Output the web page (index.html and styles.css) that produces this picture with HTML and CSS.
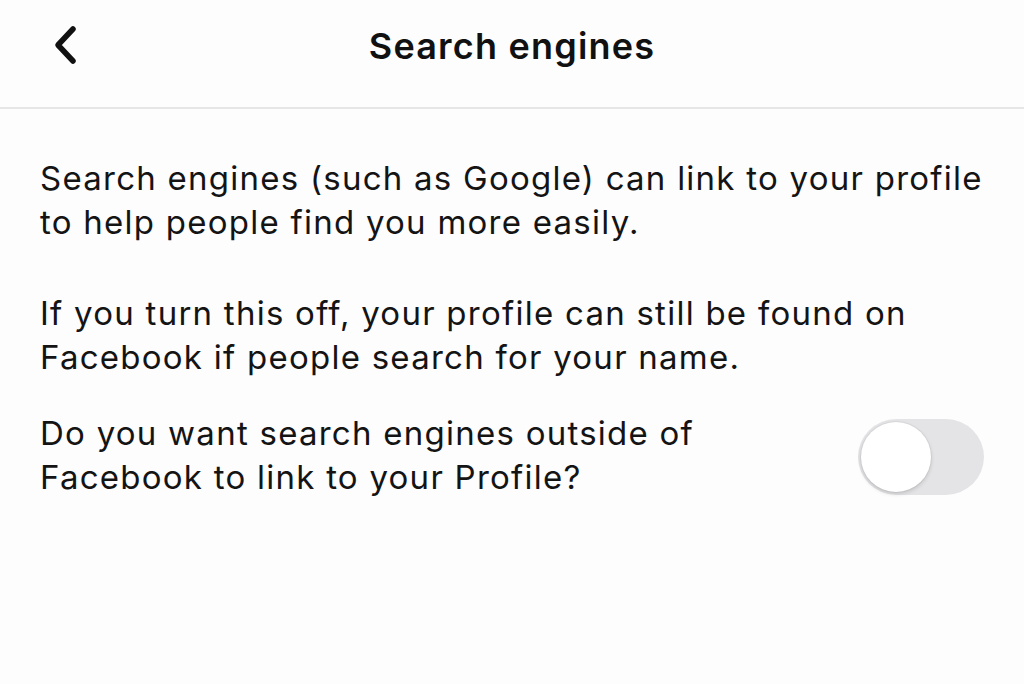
FILE: index.html
```html
<!DOCTYPE html>
<html>
<head>
<meta charset="utf-8">
<link rel="stylesheet" href="styles.css">
</head>
<body>
<div class="screen">
  <header class="topbar">
    <button class="back" aria-label="Back">
      <svg width="28" height="40" viewBox="0 0 28 40"><path d="M21 4 L6 20 L21 36" fill="none" stroke="#111" stroke-width="5.5" stroke-linecap="round" stroke-linejoin="round"/></svg>
    </button>
    <h1 class="title">Search engines</h1>
  </header>
  <main class="content">
    <p class="para first">Search engines (such as Google) can link to your profile to help people find you more easily.</p>
    <p class="para second">If you turn this off, your profile can still be found on Facebook if people search for your name.</p>
    <div class="row">
      <p class="para question">Do you want search engines outside of Facebook to link to your Profile?</p>
      <div class="toggle"><div class="knob"></div></div>
    </div>
  </main>
</div>
</body>
</html>
```
FILE: styles.css
```css
html, body {
  margin: 0;
  padding: 0;
  background: #fdfdfd;
}
body {
  width: 1024px;
  height: 684px;
  overflow: hidden;
  font-family: Inter, "Noto Sans", sans-serif;
  color: #141414;
}
.topbar {
  height: 107px;
  border-bottom: 2px solid #e6e6e6;
  display: flex;
  align-items: center;
  justify-content: center;
  position: relative;
}
.back {
  position: absolute;
  left: 52px;
  top: 25px;
  background: none;
  border: none;
  padding: 0;
  width: 28px;
  height: 40px;
}
.title {
  margin: 0 0 16px 0;
  font-size: 36px;
  font-weight: 600;
  letter-spacing: 1.2px;
  color: #111;
}
.content {
  padding: 47px 36px 0 40px;
}
.para {
  margin: 0;
  font-size: 33px;
  line-height: 44px;
  font-weight: 400;
  letter-spacing: 1.25px;
}
.second {
  margin-top: 47px;
}
.row {
  margin-top: 32px;
  display: flex;
  align-items: center;
  justify-content: space-between;
}
.question {
  width: 700px;
}
.toggle {
  width: 126px;
  height: 76px;
  border-radius: 38px;
  background: #e4e4e6;
  margin-right: 4px;
  margin-top: 4px;
  position: relative;
  box-sizing: border-box;
  padding: 3px;
  display: flex;
  align-items: center;
}
.knob {
  width: 70px;
  height: 70px;
  border-radius: 50%;
  background: #fff;
  box-shadow: 0 2px 4px rgba(0,0,0,0.15), 0 0 0 1px rgba(0,0,0,0.04);
}
```
